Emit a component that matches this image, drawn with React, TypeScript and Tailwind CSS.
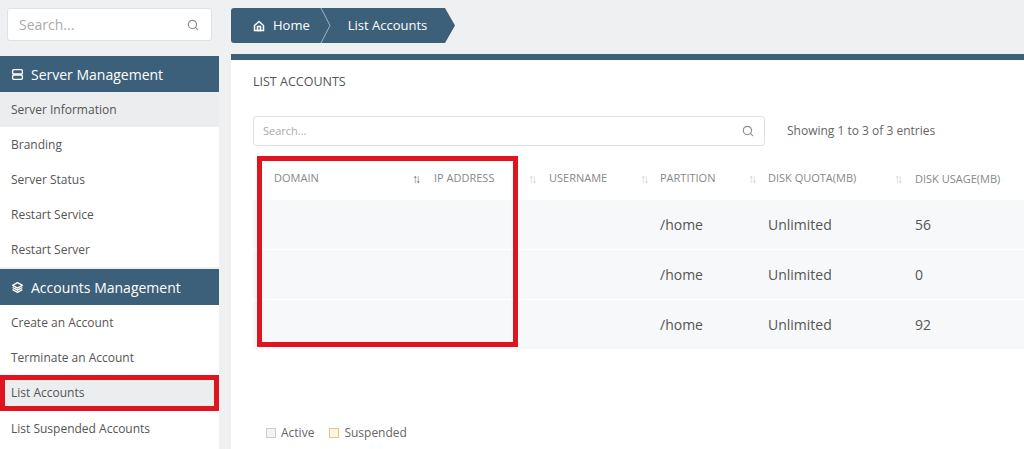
import React from "react";

const F = { fontFamily: '"Open Sans", "Noto Sans", sans-serif' };
const DARK = "bg-[#3c6079]";

function SearchIcon({ size = 14 }: { size?: number }) {
  return (
    <svg width={size} height={size} viewBox="0 0 24 24" fill="none" stroke="#8a8f94" strokeWidth="2" strokeLinecap="round">
      <circle cx="11" cy="11" r="7" />
      <path d="M20 20l-4-4" />
    </svg>
  );
}

function Sort({ active }: { active?: boolean }) {
  return <span className={`text-[12px] tracking-[-3px] ${active ? "text-[#666]" : "text-[#ccc]"}`}>↑↓</span>;
}

export default function App() {
  const items1 = ["Server Information", "Branding", "Server Status", "Restart Service", "Restart Server"];
  const items2 = ["Create an Account", "Terminate an Account", "List Accounts", "List Suspended Accounts"];
  const rows = [["/home", "Unlimited", "56"], ["/home", "Unlimited", "0"], ["/home", "Unlimited", "92"]];
  return (
    <div style={F} className="w-[1024px] h-[449px] overflow-hidden bg-[#eef0f2] flex text-[#555]">
      <div className="w-[219px] bg-white flex flex-col shrink-0">
        <div className="h-[56px] bg-[#eef0f2] px-[7px] pt-[8px]">
          <div className="h-[33px] bg-white border border-[#dfe2e5] rounded-[3px] flex items-center justify-between px-[11px]">
            <span className="text-[14px] text-[#aaa]">Search...</span>
            <SearchIcon />
          </div>
        </div>
        <div className={`${DARK} h-[36px] flex items-center px-[11px] gap-[7px] text-white text-[14px]`}>
          <svg width="13" height="13" viewBox="0 0 24 24" fill="none" stroke="white" strokeWidth="2.5"><rect x="3" y="3" width="18" height="8" rx="2"/><rect x="3" y="13" width="18" height="8" rx="2"/></svg>
          Server Management
        </div>
        {items1.map((t, i) => (
          <div key={t} className={`h-[35px] flex items-center px-[11px] text-[12px] ${i === 0 ? "bg-[#ebedef]" : ""}`}>{t}</div>
        ))}
        <div className="h-[2px] bg-[#eef0f2]" />
        <div className={`${DARK} h-[36px] flex items-center px-[11px] gap-[7px] text-white text-[14px]`}>
          <svg width="13" height="13" viewBox="0 0 24 24" fill="none" stroke="white" strokeWidth="2.5" strokeLinejoin="round"><path d="M12 3l9 5-9 5-9-5z"/><path d="M3 12l9 5 9-5"/><path d="M3 16l9 5 9-5"/></svg>
          Accounts Management
        </div>
        {items2.map((t) =>
          t === "List Accounts" ? (
            <div key={t} className="h-[36px] flex items-center">
              <div className="h-[36px] w-[219px] border-[5px] border-[#e0141f] bg-[#ebedef] flex items-center px-[6px] text-[12px]">{t}</div>
            </div>
          ) : (
            <div key={t} className="h-[35px] flex items-center px-[11px] text-[12px]">{t}</div>
          )
        )}
      </div>
      <div className="flex-1 pl-[12px] flex flex-col">
        <div className="h-[54px] pt-[8px]">
          <div className="flex h-[35px] text-white text-[13px]">
            <div className={`${DARK} rounded-l-[3px] flex items-center pl-[22px] pr-[20px] gap-[8px]`}>
              <svg width="12" height="12" viewBox="0 0 24 24" fill="none" stroke="white" strokeWidth="3"><path d="M3 11l9-8 9 8v10H3z"/><rect x="9" y="13" width="6" height="8"/></svg>
              Home
            </div>
            <div className="relative">
              <svg width="12" height="35" className="absolute left-[-10px] top-0"><path d="M1 0 L10 17.5 L1 35" fill="none" stroke="#9fb4c2" strokeWidth="1"/></svg>
            </div>
            <div className={`${DARK} flex items-center pl-[18px] pr-[18px]`}>List Accounts</div>
            <svg width="10" height="35"><path d="M0 0 L10 17.5 L0 35z" fill="#3c6079"/></svg>
          </div>
        </div>
        <div className="flex-1 bg-white border-t-[6px] border-[#3c6079] pl-[22px]">
          <div className="text-[12.5px] font-medium text-[#555] mt-[13px]">LIST ACCOUNTS</div>
          <div className="flex items-center mt-[24px]">
            <div className="w-[512px] h-[30px] border border-[#dfe2e5] rounded-[3px] flex items-center justify-between px-[9px]">
              <span className="text-[11px] text-[#aaa]">Search...</span>
              <SearchIcon size={14} />
            </div>
            <span className="ml-[22px] text-[12px] text-[#666]">Showing 1 to 3 of 3 entries</span>
          </div>
          <div className="relative mt-[13px]">
            <div className="h-[41px] flex items-center text-[11px] text-[#888] pb-[1px]">
              <div className="w-[181px] pl-[21px] flex justify-between pr-[16px]"><span>DOMAIN</span><Sort active /></div>
              <div className="w-[115px] flex justify-between pr-[15px]"><span>IP ADDRESS</span><Sort /></div>
              <div className="w-[111px] flex justify-between pr-[14px]"><span>USERNAME</span><Sort /></div>
              <div className="w-[108px] flex justify-between pr-[14px]"><span>PARTITION</span><Sort /></div>
              <div className="w-[147px] flex justify-between pr-[15px]"><span>DISK QUOTA(MB)</span><Sort /></div>
              <div className="flex-1"><span>DISK USAGE(MB)</span></div>
            </div>
            {rows.map((r, i) => (
              <div key={i} className="h-[50px] bg-[#f7f8f9] border-b border-white flex items-center text-[14px] text-[#555] pt-[1px]">
                <div className="w-[407px]" />
                <div className="w-[108px]">{r[0]}</div>
                <div className="w-[147px]">{r[1]}</div>
                <div>{r[2]}</div>
              </div>
            ))}
            <div className="absolute left-[4px] top-[-3px] w-[261px] h-[191px] border-[5px] border-[#e0141f]" />
          </div>
          <div className="flex items-center gap-[5px] mt-[74px] text-[12px] text-[#666]">
            <span className="w-[10px] h-[10px] border border-[#ccc] bg-[#f4f4f4] ml-[13px]" /> <span className="mr-[10px]">Active</span>
            <span className="w-[10px] h-[10px] border border-[#e8c77a] bg-[#fdf6e3]" /> <span>Suspended</span>
          </div>
        </div>
      </div>
    </div>
  );
}
